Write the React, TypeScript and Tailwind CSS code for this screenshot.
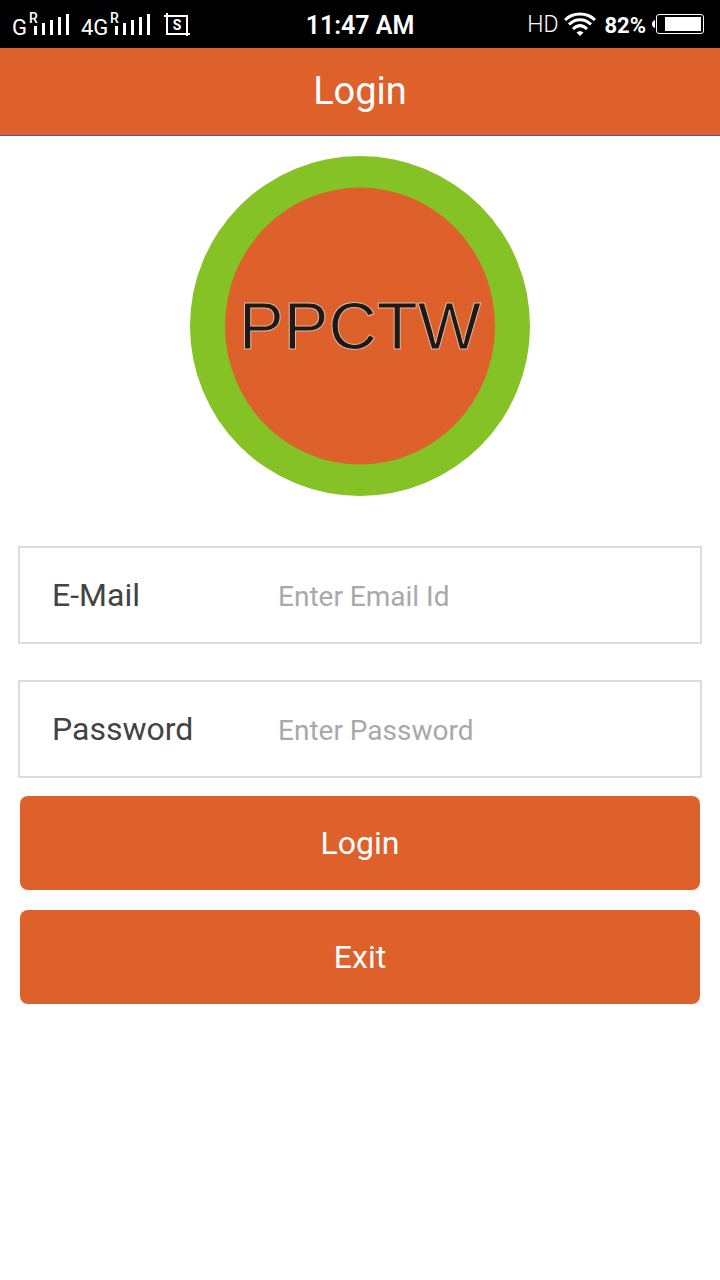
import { useState } from 'react';
import type { FormEvent } from 'react';

interface FieldProps {
  id: string;
  label: string;
  type: 'email' | 'password';
  placeholder: string;
  value: string;
  onChange: (value: string) => void;
}

interface SignalProps {
  network: string;
}

const BARS = [9, 12, 15, 18, 21];

function Signal({ network }: SignalProps) {
  return (
    <div className="flex items-end">
      <span className="text-[22px] leading-6">{network}</span>
      <svg width="42" height="32" viewBox="0 0 42 32" fill="currentColor" aria-hidden="true">
        <text x="2" y="15" className="font-['Roboto',sans-serif] text-[14px] font-medium">
          R
        </text>
        {BARS.map((height, index) => (
          <rect key={height} x={7 + index * 8} y={27 - height} width="3" height={height} />
        ))}
      </svg>
    </div>
  );
}

function StatusBar() {
  return (
    <div className="grid h-12 grid-cols-[1fr_auto_1fr] items-center bg-black px-3 text-white">
      <div className="flex items-center gap-3">
        <Signal network="G" />
        <Signal network="4G" />
        <svg width="28" height="24" viewBox="0 0 28 24" fill="none" stroke="currentColor" strokeWidth="2" aria-hidden="true">
          <path d="M2 4H25V24M5 1V22H28" />
          <text
            x="15"
            y="18"
            textAnchor="middle"
            stroke="none"
            fill="currentColor"
            className="font-['Roboto',sans-serif] text-[14px] font-bold"
          >
            S
          </text>
        </svg>
      </div>

      <span className="pt-1 text-[25px] font-semibold">11:47 AM</span>

      <div className="flex items-center justify-end gap-1.5 pr-1">
        <span className="pt-0.5 text-[23px] font-light">HD</span>
        <svg width="32" height="24" viewBox="0 0 32 24" fill="none" stroke="currentColor" strokeWidth="3" aria-hidden="true">
          <path d="M1 8C9 0 23 0 31 8" />
          <path d="M5 12.500C11.500 6 20.500 6 27 12.500" />
          <path d="M9 17C13.500 12.500 18.500 12.500 23 17" />
          <path d="M16 24L12.500 20.500Q16 17.500 19.500 20.500Z" fill="currentColor" stroke="none" />
        </svg>
        <span className="pt-0.5 pl-0.5 text-[22px] font-bold">82%</span>
        <svg width="52" height="22" viewBox="0 0 52 22" aria-hidden="true">
          <path d="M3 7V15Q0 14 0 11Q0 8 3 7Z" fill="currentColor" />
          <rect x="4.500" y="1.500" width="47" height="19" rx="2.500" fill="none" stroke="currentColor" />
          <rect x="13" y="4" width="36" height="14" fill="currentColor" />
        </svg>
      </div>
    </div>
  );
}

function Logo() {
  return (
    <svg width="340" height="340" viewBox="0 0 340 340" role="img" aria-label="PPCTW">
      <circle cx="170" cy="170" r="170" fill="#84c225" />
      <ellipse cx="170" cy="170" rx="135" ry="138.500" fill="#de602a" />
      <text
        x="170"
        y="193"
        textAnchor="middle"
        fill="#1f1a17"
        stroke="#d8b8a4"
        strokeWidth="1"
        className="font-['Liberation_Sans',sans-serif] text-[67px]"
      >
        PPCTW
      </text>
    </svg>
  );
}

function Field({ id, label, type, placeholder, value, onChange }: FieldProps) {
  return (
    <div className="flex h-[98px] items-center border-2 border-[#dcdcdc] px-8">
      <label htmlFor={id} className="w-1/3 max-w-[226px] shrink-0 text-[32px] text-[#434343] sm:w-[226px]">
        {label}
      </label>
      <input
        id={id}
        type={type}
        value={value}
        onChange={(event) => onChange(event.target.value)}
        placeholder={placeholder}
        className="h-full min-w-0 flex-1 pt-0.5 text-[28px] text-[#434343] outline-none placeholder:text-[#a9a9a9]"
      />
    </div>
  );
}

export default function App() {
  const [email, setEmail] = useState('');
  const [password, setPassword] = useState('');

  const handleSubmit = (event: FormEvent) => {
    event.preventDefault();
  };

  const handleExit = () => {
    setEmail('');
    setPassword('');
  };

  return (
    <div className="min-h-screen bg-white font-['Roboto',sans-serif]">
      <StatusBar />

      <header className="flex h-[88px] items-center justify-center border-b border-[#5f4f8f] bg-[#de602a]">
        <h1 className="text-[38px] text-white">Login</h1>
      </header>

      <main className="py-5">
        <div className="flex justify-center">
          <Logo />
        </div>

        <form onSubmit={handleSubmit} className="mt-[50px]">
          <div className="flex flex-col gap-9 px-[18px]">
            <Field
              id="email"
              label="E-Mail"
              type="email"
              placeholder="Enter Email Id"
              value={email}
              onChange={setEmail}
            />
            <Field
              id="password"
              label="Password"
              type="password"
              placeholder="Enter Password"
              value={password}
              onChange={setPassword}
            />
          </div>

          <div className="mt-[18px] flex flex-col gap-5 px-5">
            <button type="submit" className="h-[94px] rounded-lg bg-[#de602a] text-[32px] text-white">
              Login
            </button>
            <button
              type="button"
              onClick={handleExit}
              className="h-[94px] rounded-lg bg-[#de602a] text-[32px] text-white"
            >
              Exit
            </button>
          </div>
        </form>
      </main>
    </div>
  );
}
